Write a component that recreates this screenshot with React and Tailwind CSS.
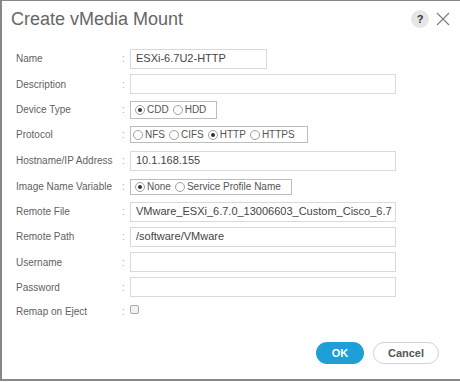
import React from "react";

const Radio = ({ label, checked }) => (
  <span className="flex items-center mr-[4px]">
    <span className="w-[10px] h-[10px] rounded-full border border-[#a0a0a0] bg-white flex items-center justify-center">
      {checked && <span className="w-[4px] h-[4px] rounded-full bg-[#333]" />}
    </span>
    <span className="ml-[2px] text-[10px] text-[#555]">{label}</span>
  </span>
);

const Row = ({ label, h, children }) => (
  <div className={`flex items-center ${h}`}>
    <div className="w-[106px] text-[10px] text-[#5f5f5f]">{label}</div>
    <div className="w-[8px] text-[10px] text-[#aaa]">:</div>
    {children}
  </div>
);

const TextBox = ({ value, wide = true }) => (
  <div
    className={`h-[20px] border border-[#d9d9d9] flex items-center pl-[5px] text-[11px] text-[#444] whitespace-nowrap overflow-hidden ${
      wide ? "w-[266px]" : "w-[137px]"
    }`}
  >
    {value}
  </div>
);

export default function App() {
  return (
    <div className="w-[460px] h-[382px] bg-white font-['Liberation_Sans',Arial,sans-serif]">
      <div className="h-[381px] border-t border-l-2 border-b-2 border-[#878787] flex flex-col">
        <div className="h-[36px] flex items-center justify-between pl-[9px] pr-[9px]">
          <div className="text-[18px] text-[#666]">Create vMedia Mount</div>
          <div className="flex items-center gap-[6px]">
            <div className="w-[18px] h-[18px] rounded-full bg-[#e6e6e6] flex items-center justify-center text-[11px] font-bold text-[#333]">
              ?
            </div>
            <svg width="16" height="16" viewBox="0 0 16 16">
              <path d="M2 2 L14 14 M14 2 L2 14" stroke="#7a7a7a" strokeWidth="1.1" fill="none" />
            </svg>
          </div>
        </div>

        <div className="pt-[9px] pl-[14px] flex flex-col">
          <Row label="Name" h="h-[25px]">
            <TextBox value="ESXi-6.7U2-HTTP" wide={false} />
          </Row>
          <Row label="Description" h="h-[26px]">
            <TextBox value="" />
          </Row>
          <Row label="Device Type" h="h-[25px]">
            <div className="w-[87px] h-[18px] border border-[#bdbdbd] flex items-center pl-[4px]">
              <Radio label="CDD" checked />
              <Radio label="HDD" />
            </div>
          </Row>
          <Row label="Protocol" h="h-[25px]">
            <div className="w-[178px] h-[17px] border border-[#bdbdbd] flex items-center pl-[2px]">
              <Radio label="NFS" />
              <Radio label="CIFS" />
              <Radio label="HTTP" checked />
              <Radio label="HTTPS" />
            </div>
          </Row>
          <Row label="Hostname/IP Address" h="h-[27px]">
            <TextBox value="10.1.168.155" />
          </Row>
          <Row label="Image Name Variable" h="h-[25px]">
            <div className="w-[162px] h-[16px] border border-[#bdbdbd] flex items-center pl-[4px]">
              <Radio label="None" checked />
              <Radio label="Service Profile Name" />
            </div>
          </Row>
          <Row label="Remote File" h="h-[25px]">
            <TextBox value="VMware_ESXi_6.7.0_13006603_Custom_Cisco_6.7" />
          </Row>
          <Row label="Remote Path" h="h-[25px]">
            <TextBox value="/software/VMware" />
          </Row>
          <Row label="Username" h="h-[26px]">
            <TextBox value="" />
          </Row>
          <Row label="Password" h="h-[24px]">
            <TextBox value="" />
          </Row>
          <Row label="Remap on Eject" h="h-[24px]">
            <div className="w-[9px] h-[9px] border border-[#a8a8a8] rounded-[2px] bg-[#f2f2f2] -mt-[4px]" />
          </Row>
        </div>

        <div className="mt-[19px] flex justify-end gap-[9px] pr-[21px]">
          <button className="w-[48px] h-[22px] rounded-full bg-[#1e9fd8] text-white text-[11px] font-bold">
            OK
          </button>
          <button className="w-[66px] h-[22px] rounded-full border border-[#d3d3d3] bg-white text-[#555] text-[11px] font-bold">
            Cancel
          </button>
        </div>
      </div>
    </div>
  );
}
